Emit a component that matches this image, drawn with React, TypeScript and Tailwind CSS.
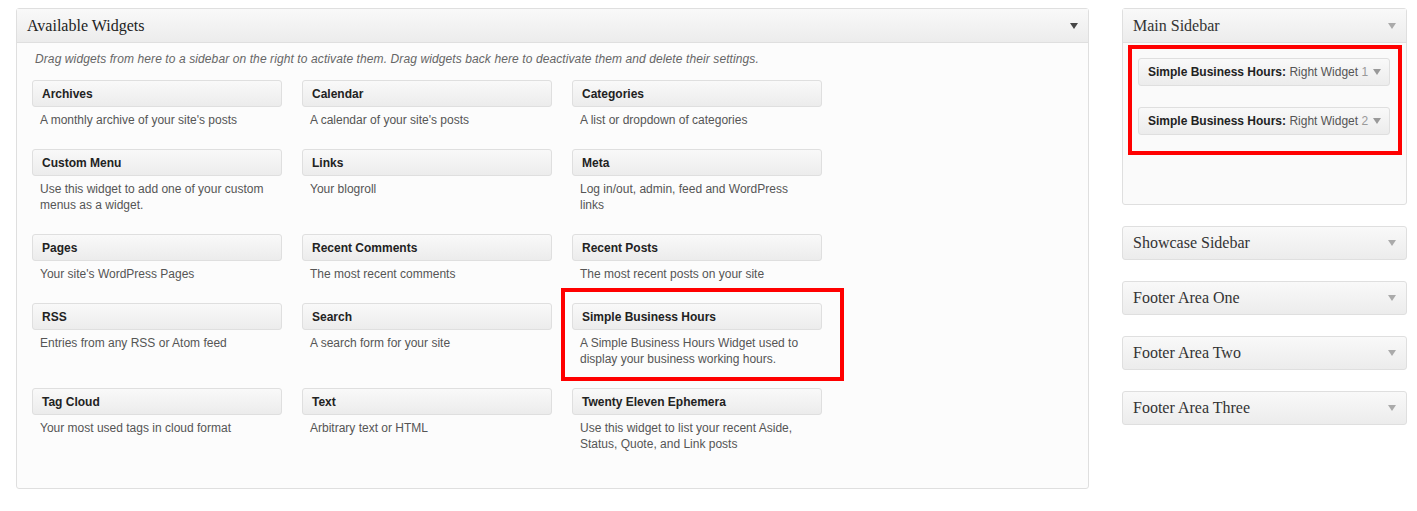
const widgets: { title: string; desc: string }[] = [
  { title: 'Archives', desc: "A monthly archive of your site's posts" },
  { title: 'Calendar', desc: "A calendar of your site's posts" },
  { title: 'Categories', desc: 'A list or dropdown of categories' },
  { title: 'Custom Menu', desc: 'Use this widget to add one of your custom menus as a widget.' },
  { title: 'Links', desc: 'Your blogroll' },
  { title: 'Meta', desc: 'Log in/out, admin, feed and WordPress links' },
  { title: 'Pages', desc: "Your site's WordPress Pages" },
  { title: 'Recent Comments', desc: 'The most recent comments' },
  { title: 'Recent Posts', desc: 'The most recent posts on your site' },
  { title: 'RSS', desc: 'Entries from any RSS or Atom feed' },
  { title: 'Search', desc: 'A search form for your site' },
  { title: 'Simple Business Hours', desc: 'A Simple Business Hours Widget used to display your business working hours.' },
  { title: 'Tag Cloud', desc: 'Your most used tags in cloud format' },
  { title: 'Text', desc: 'Arbitrary text or HTML' },
  { title: 'Twenty Eleven Ephemera', desc: 'Use this widget to list your recent Aside, Status, Quote, and Link posts' },
];

const sidebars = ['Showcase Sidebar', 'Footer Area One', 'Footer Area Two', 'Footer Area Three'];

const serif = { fontFamily: 'Georgia, "Liberation Serif", serif' };

function Arrow({ className }: { className: string }) {
  return (
    <svg width="8" height="6" viewBox="0 0 8 6" className={className}>
      <path d="M0 0 L8 0 L4 6 Z" fill="currentColor" />
    </svg>
  );
}

function WidgetItem({ title, desc, marked }: { title: string; desc: string; marked?: boolean }) {
  return (
    <div className="relative w-[250px]">
      <div className="h-[27px] rounded-[3px] border border-[#dfdfdf] bg-gradient-to-b from-[#f9f9f9] to-[#ececec] pl-[9px] text-[12px] font-bold leading-[27px] text-[#222]">
        {title}
      </div>
      <p className="mt-[5px] mb-[21px] pl-[8px] pr-[10px] text-[12px] leading-[16px] text-[#555]">{desc}</p>
      {/* annotation frame */}
      {marked && (
        <div className="pointer-events-none absolute left-[-11px] top-[-15px] h-[93px] w-[283px] border-[4px] border-[#ff0000]" />
      )}
    </div>
  );
}

export default function App() {
  return (
    <div
      className="flex h-[511px] w-[1417px] items-start gap-[33px] bg-white pl-[16px] pt-[8px]"
      style={{ fontFamily: '"Liberation Sans", Arial, sans-serif' }}
    >
      {/* Available Widgets */}
      <div className="w-[1073px] rounded-[3px] border border-[#dfdfdf] bg-[#fcfcfc]">
        <div className="flex h-[34px] items-center justify-between border-b border-[#dfdfdf] bg-gradient-to-b from-[#f9f9f9] to-[#ececec] pl-[10px] pr-[10px]">
          <span className="text-[16px] text-[#222]" style={serif}>Available Widgets</span>
          <Arrow className="text-[#464646]" />
        </div>
        <div className="px-[15px] pt-[8px] pb-[15px]">
          <p className="mb-[13px] pl-[3px] text-[12px] italic leading-[16px] tracking-[0.1px] text-[#666]">
            Drag widgets from here to a sidebar on the right to activate them. Drag widgets back here to deactivate them and delete their settings.
          </p>
          <div className="grid grid-cols-[250px_250px_250px] gap-x-[20px]">
            {widgets.map((w) => (
              <WidgetItem key={w.title} title={w.title} desc={w.desc} marked={w.title === 'Simple Business Hours'} />
            ))}
          </div>
        </div>
      </div>

      {/* Sidebars */}
      <div className="flex w-[285px] flex-col gap-[21px]">
        <div className="relative h-[197px] rounded-[3px] border border-[#dfdfdf] bg-[#fafafa]">
          <div className="flex h-[34px] items-center justify-between border-b border-[#dfdfdf] bg-gradient-to-b from-[#f9f9f9] to-[#ececec] pl-[10px] pr-[10px]">
            <span className="text-[16px] text-[#333]" style={serif}>Main Sidebar</span>
            <Arrow className="text-[#aaa]" />
          </div>
          <div className="flex flex-col gap-[21px] pl-[15px] pr-[16px] pt-[15px]">
            {['1', '2'].map((n) => (
              <div
                key={n}
                className="flex h-[28px] items-center justify-between rounded-[3px] border border-[#dfdfdf] bg-gradient-to-b from-[#f9f9f9] to-[#ececec] pl-[9px] pr-[8px] text-[12px]"
              >
                <span className="whitespace-nowrap">
                  <span className="font-bold text-[#222]">Simple Business Hours:</span>
                  <span className="text-[#555]"> Right Widget</span>
                  <span className="text-[#999]"> {n}</span>
                </span>
                <Arrow className="ml-[3px] shrink-0 text-[#999]" />
              </div>
            ))}
          </div>
          {/* annotation frame */}
          <div className="pointer-events-none absolute left-[5px] top-[36px] h-[110px] w-[274px] border-[4px] border-[#ff0000]" />
        </div>
        {sidebars.map((s) => (
          <div
            key={s}
            className="flex h-[34px] items-center justify-between rounded-[3px] border border-[#dfdfdf] bg-gradient-to-b from-[#f9f9f9] to-[#ececec] pl-[10px] pr-[10px]"
          >
            <span className="text-[16px] text-[#333]" style={serif}>{s}</span>
            <Arrow className="text-[#aaa]" />
          </div>
        ))}
      </div>
    </div>
  );
}
